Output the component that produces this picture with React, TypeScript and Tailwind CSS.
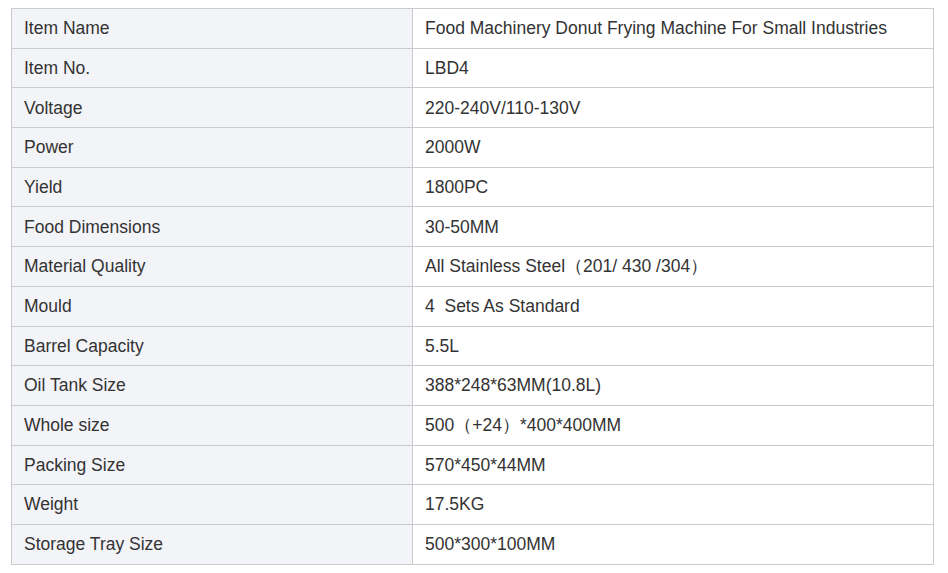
const rows: [string, string][] = [
  ["Item Name", "Food Machinery Donut Frying Machine For Small Industries"],
  ["Item No.", "LBD4"],
  ["Voltage", "220-240V/110-130V"],
  ["Power", "2000W"],
  ["Yield", "1800PC"],
  ["Food Dimensions", "30-50MM"],
  ["Material Quality", "All Stainless Steel（201/ 430 /304）"],
  ["Mould", "4  Sets As Standard"],
  ["Barrel Capacity", "5.5L"],
  ["Oil Tank Size", "388*248*63MM(10.8L)"],
  ["Whole size", "500（+24）*400*400MM"],
  ["Packing Size", "570*450*44MM"],
  ["Weight", "17.5KG"],
  ["Storage Tray Size", "500*300*100MM"],
];

export default function App() {
  return (
    <div className="min-h-[573px] bg-white pl-[11px] pt-[8px] font-['Liberation_Sans',Arial,sans-serif] text-[17.5px] text-[#333]">
      <table className="w-[923px] border-collapse">
        <tbody>
          {rows.map(([k, v]) => (
            <tr key={k} className="h-[39.7px]">
              <td className="w-[401px] border border-[#cbcbcb] bg-[#f3f4f8] px-3 whitespace-pre">{k}</td>
              <td className="border border-[#cbcbcb] bg-white px-3 whitespace-pre">{v}</td>
            </tr>
          ))}
        </tbody>
      </table>
    </div>
  );
}
